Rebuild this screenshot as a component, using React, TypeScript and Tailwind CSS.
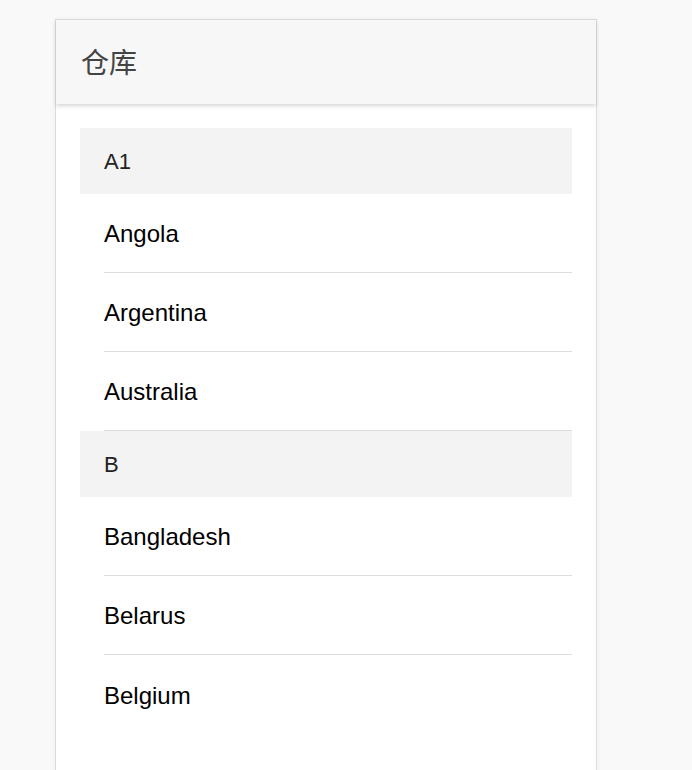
const groups = [
  { title: "A1", items: ["Angola", "Argentina", "Australia"] },
  { title: "B", items: ["Bangladesh", "Belarus", "Belgium"] },
];

export default function App() {
  return (
    <div
      className="h-[770px] overflow-hidden bg-[#f9f9f9] pt-[19px] pl-[55px]"
      style={{ fontFamily: '"Liberation Sans", Arial, "Noto Sans CJK SC", sans-serif' }}
    >
      <div className="w-[542px] h-[800px] border border-[#dcdcdc] bg-white shadow-[0_0_6px_rgba(0,0,0,0.04)]">
        {/* Cabecera */}
        <div className="h-[84px] flex items-center pl-[25px] pt-1 bg-[#f7f7f7] shadow-[0_2px_4px_rgba(0,0,0,0.16)] relative">
          <span className="text-[28px] text-[#444] leading-none">仓库</span>
        </div>

        <div className="px-6 pt-6">
          {groups.map((group, gi) => (
            <div key={group.title}>
              <div className="h-[66px] flex items-center pl-6 bg-[#f3f3f3] text-[22px] text-[#222]">
                {group.title}
              </div>
              {group.items.map((item, i) => (
                <div key={item} className="pl-6">
                  <div
                    className={`h-[79px] flex items-center pt-0.5 text-[24px] text-black ${
                      gi === groups.length - 1 && i === group.items.length - 1
                        ? ""
                        : "border-b border-[#dddddd]"
                    }`}
                  >
                    {item}
                  </div>
                </div>
              ))}
            </div>
          ))}
        </div>
      </div>
    </div>
  );
}
